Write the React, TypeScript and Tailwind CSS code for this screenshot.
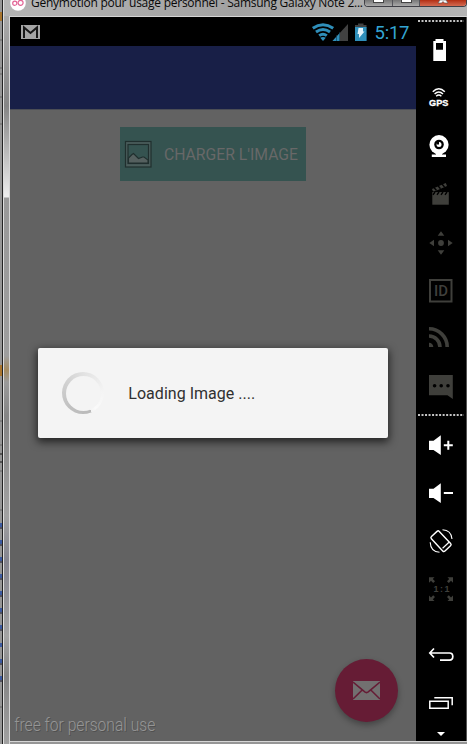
import type { ReactNode } from 'react';

function Tool({ children, dim = false }: { children: ReactNode; dim?: boolean }) {
  return (
    <svg
      viewBox="0 0 50 48"
      className={`block h-12 w-[50px] shrink-0 ${dim ? 'text-[#3f3f3b]' : 'text-white'}`}
      fill="currentColor"
    >
      {children}
    </svg>
  );
}

function Dots() {
  return (
    <svg viewBox="0 0 50 2" className="block h-0.5 w-[50px] shrink-0">
      <path d="M2 1H48" stroke="#c4c4c4" strokeWidth="2" strokeDasharray="2 1.52" />
    </svg>
  );
}

function TitleBar() {
  return (
    <div className="flex h-4 w-full shrink-0 items-start bg-gradient-to-r from-[#b5b5b5] via-[#a2a2a2] to-[#b4b4b4]">
      <svg viewBox="0 0 24 16" className="block h-4 w-6 shrink-0">
        <circle cx="14" cy="3" r="7.8" fill="#fff" />
        <g fill="none" stroke="#e36596" strokeWidth="1.2">
          <circle cx="10.8" cy="3.2" r="2.1" />
          <circle cx="16.6" cy="2.8" r="2.5" />
        </g>
      </svg>
      <svg viewBox="0 0 336 16" className="block h-4 w-[336px] shrink-0">
        <text x="3" y="7.4" textLength="332" className="font-['Open_Sans',sans-serif] text-[12px]" fill="#080808">
          Genymotion pour usage personnel - Samsung Galaxy Note 2...
        </text>
      </svg>
      <div className="flex h-[7px] w-[103px] overflow-hidden rounded-b-[4px] border border-t-0 border-[#3f3f46] bg-[#d0d0d0]">
        <div className="flex w-7 justify-center border-r border-[#55555b] bg-gradient-to-b from-[#777] to-[#aaa]">
          <div className="h-[3px] w-[11px] border-x border-b border-[#444] bg-white" />
        </div>
        <div className="flex w-[27px] justify-center border-r border-[#55555b] bg-gradient-to-b from-[#777] to-[#aaa]">
          <div className="h-[3px] w-[11px] border-x border-b border-[#444] bg-white" />
        </div>
        <div className="flex flex-1 justify-center bg-gradient-to-b from-[#b32d10] to-[#d46a50]">
          <svg viewBox="0 0 12 4" className="h-1 w-3">
            <path d="M3 0H9L11 3H7.5L6 1.5L4.5 3H1Z" fill="#fff" stroke="#555" strokeWidth=".6" />
          </svg>
        </div>
      </div>
    </div>
  );
}

function StatusBar() {
  return (
    <div className="flex h-[29px] shrink-0 bg-black">
      <svg viewBox="10 17 406 29" className="block h-[29px] w-full">
        <rect x="21" y="25" width="19" height="14" fill="#a5a5a5" />
        <path d="M24 38V27.5L30.5 33L37 27.5V38" fill="none" stroke="#181818" strokeWidth="2" />
        <g fill="none" stroke="#2f8fba" strokeWidth="3">
          <path d="M312.8 28.2Q323 21.4 333.2 28.2" />
          <path d="M316 32Q323 27 330 32" />
          <path d="M319.2 35.6Q323 32.8 326.8 35.6" />
        </g>
        <path d="M320.2 37.8Q323 36 325.8 37.8L323 41Z" fill="#2f8fba" />
        <path d="M348 24V41H332.5Z" fill="#414141" />
        <path d="M340 32.8V41H332.5Z" fill="#2f8fba" />
        <path d="M336.5 35V41M339.5 32V41" stroke="#123b4d" strokeWidth=".6" />
        <path d="M358 23.5H363.5V25H366.5V27.5H355V25H358Z" fill="#414141" />
        <rect x="355" y="27" width="11.6" height="14" fill="#2f8fba" />
        <path d="M358.5 28H363V31.5H364.5L359 38V34H357.5Z" fill="#e4f3fa" />
        <text x="374.5" y="39.2" textLength="35" className="font-['Roboto',sans-serif] text-[18.5px]" fill="#33a5d3">5:17</text>
      </svg>
    </div>
  );
}

function LoadButton() {
  return (
    <div className="ml-[110px] mt-[17px] flex h-[54px] w-[186px] shrink-0 items-center bg-[#355350]">
      <svg viewBox="0 0 28 28" className="ml-1 block h-7 w-7 shrink-0">
        <rect x="1.5" y="1.5" width="25.5" height="25.5" fill="#4a5d5b" stroke="#202f2e" strokeWidth="1.2" />
        <rect x="4" y="4.5" width="20.5" height="19" fill="#355350" stroke="#202f2e" strokeWidth="1.2" />
        <path d="M4.5 23V18L8 14.5L9.5 13.5L12 16L14.5 18.5L18.5 17L20 17L24 20V23Z" fill="#55605f" stroke="#202f2e" strokeWidth="1.1" />
      </svg>
      <svg viewBox="0 0 150 28" className="block h-7 w-[150px] shrink-0">
        <text x="12" y="20" textLength="134" lengthAdjust="spacingAndGlyphs" className="font-['Roboto',sans-serif] text-[16px]" fill="#686868">
          CHARGER L'IMAGE
        </text>
      </svg>
    </div>
  );
}

function LoadingDialog() {
  return (
    <div className="ml-7 mt-[167px] flex h-[90px] w-[350px] shrink-0 items-center rounded-[2px] bg-[#f4f4f4] shadow-[0_3px_9px_1px_rgba(0,0,0,0.65)]">
      <div className="ml-6 h-[42px] w-[42px] rounded-full bg-[conic-gradient(from_156deg,#bababa_0deg,#c0c0c0_65deg,#d2d2d2_150deg,#e3e3e3_210deg,#f4f4f4_290deg,#fafafa_345deg,#f4f4f4_360deg)] p-[3.5px]">
        <div className="h-full w-full rounded-full bg-[#f4f4f4]" />
      </div>
      <svg viewBox="0 0 160 30" className="ml-6 block h-[30px] w-40">
        <text x="0.3" y="21.3" textLength="127" className="font-['Roboto',sans-serif] text-[16px]" fill="#303030">Loading Image ....</text>
      </svg>
    </div>
  );
}

function PhoneScreen() {
  return (
    <div className="flex h-[724px] w-[406px] shrink-0 flex-col bg-[#626262]">
      <StatusBar />
      <div className="h-16 shrink-0 border-b border-[#4b4d55] bg-[#181f47]" />
      <LoadButton />
      <LoadingDialog />
      <div className="flex flex-1 items-end justify-between">
        <svg viewBox="0 0 180 30" className="block h-[30px] w-[180px]">
          <text x="4.3" y="20" textLength="141" lengthAdjust="spacingAndGlyphs" className="font-['Roboto',sans-serif] text-[18px] font-light [text-shadow:1px_1px_0_#505050]" fill="#959595">free for personal use</text>
        </svg>
        <div className="mb-[19px] mr-[18px] flex h-[63px] w-[63px] items-center justify-center rounded-full bg-[#661c35] shadow-[0_3px_6px_rgba(0,0,0,0.32)]">
          <svg viewBox="0 0 27 19" className="h-[19px] w-[27px]">
            <rect width="27" height="19" fill="#727070" />
            <path d="M0 1L10.5 9.8Q13.5 13.5 16.5 9.8L27 1M0 18L9.2 9M27 18L17.8 9" fill="none" stroke="#661c35" strokeWidth="1.6" />
          </svg>
        </div>
      </div>
    </div>
  );
}

function Toolbar() {
  return (
    <div className="flex h-[724px] w-[50px] shrink-0 flex-col bg-black pt-[3px]">
      <Dots />
      <div className="mt-1">
        <Tool><path fillRule="evenodd" d="M19.5 13H27.5V15H30V35H17.3V15H19.5ZM20 17V23.7H27V17Z" /></Tool>
        <Tool>
          <g fill="none" stroke="currentColor" strokeWidth="1.5">
            <path d="M16.8 17.8Q22.8 11.7 28.8 17.8M18.6 20.1Q22.8 15.8 27 20.1M20.2 22.2Q22.8 19.8 25.4 22.2" />
          </g>
          <text x="13" y="32.1" textLength="19.4" lengthAdjust="spacingAndGlyphs" className="font-['Liberation_Sans',sans-serif] text-[9px] font-bold" stroke="currentColor" strokeWidth=".3">GPS</text>
        </Tool>
        <Tool>
          <circle cx="23" cy="22.7" r="9.6" />
          <path d="M20 31H26V32.4H30V35H15.8V32.4H20Z" />
          <circle cx="23" cy="22.5" r="4.8" fill="#000" />
          <circle cx="23" cy="22.5" r="2.5" />
          <path d="M23 22.5V19.7H20.5V22.5Z" fill="#000" />
        </Tool>
        <Tool dim>
          <path d="M16.3 22H32.8V34.7H16.3Z" />
          <path d="M16 19L29.8 13L31 16L17.2 22Z" />
          <path d="M17 24.8L19 22M21 24.8L23 22M25 24.8L27 22M29 24.8L31 22M18 17.5L20.5 20.5M22 15.8L24.5 18.8M26 14L28.5 17" stroke="#000" strokeWidth="1.4" />
          <path d="M16.3 21.6H33" stroke="#000" strokeWidth=".6" />
        </Tool>
        <Tool dim>
          <circle cx="25" cy="25" r="2.9" />
          <path d="M25 13.3L28.3 17.8H21.7ZM25 36.8L28.3 32.3H21.7ZM13.3 25L18 21.7V28.3ZM36.7 25L32 21.7V28.3Z" />
        </Tool>
        <Tool dim>
          <rect x="14" y="14" width="21.5" height="21.5" fill="none" stroke="currentColor" strokeWidth="2" />
          <text x="18" y="30.2" textLength="14" lengthAdjust="spacingAndGlyphs" className="font-['Roboto',sans-serif] text-[15px] font-medium">ID</text>
        </Tool>
        <Tool dim>
          <path d="M13 28.7A4.3 4.3 0 0 1 17.3 33H13Z" />
          <path d="M13 22A11 11 0 0 1 24 33M13 14.8A18.2 18.2 0 0 1 31.2 33" fill="none" stroke="currentColor" strokeWidth="3.6" />
        </Tool>
        <Tool dim>
          <path d="M13 13H36.8V37L31.5 33.3H13Z" />
          <g fill="#000">
            <circle cx="18.6" cy="23.7" r="1.8" />
            <circle cx="25.2" cy="23.7" r="1.8" />
            <circle cx="32" cy="23.7" r="1.8" />
          </g>
        </Tool>
      </div>
      <div className="mb-[5px] mt-1"><Dots /></div>
      <Tool>
        <path d="M13 19.7H17.5L24.8 14.2V34L17.5 29H13Z" />
        <path d="M27.8 24.3H36.8M32.3 19.8V28.8" stroke="currentColor" strokeWidth="2" />
      </Tool>
      <Tool>
        <path d="M13 19.7H17.5L24.8 14.2V34L17.5 29H13Z" />
        <path d="M27.8 24H37" stroke="currentColor" strokeWidth="2" />
      </Tool>
      <Tool>
        <g fill="none" stroke="currentColor">
          <rect x="19.6" y="14.3" width="10.8" height="19.8" rx="1.6" strokeWidth="1.4" transform="rotate(-43 25 24.2)" />
          <path d="M26.6 31.2L33 25.2" strokeWidth="1.2" />
          <path d="M26.5 12.8Q35.2 13.2 36 22M14.2 25.2Q14.6 34.6 23.5 35.3" strokeWidth="1.1" />
        </g>
      </Tool>
      <Tool dim>
        <path d="M13 12.3H18.5L16.8 14L19 16.2L17.2 18L15 15.8L13 17.8ZM37 12.3H31.5L33.2 14L31 16.2L32.8 18L35 15.8L37 17.8ZM13 36H18.5L16.8 34.3L19 32.1L17.2 30.3L15 32.5L13 30.5ZM37 36H31.5L33.2 34.3L31 32.1L32.8 30.3L35 32.5L37 30.5Z" />
        <text x="17.5" y="27.3" textLength="16" className="font-['Liberation_Sans',sans-serif] text-[9px] font-bold">1:1</text>
      </Tool>
      <div className="mt-auto flex flex-col">
        <Tool>
          <path d="M14 22H33.5Q36.8 22 36.8 25.5T33.5 29.2H24M18 17.5L13.8 22L18 26.5" fill="none" stroke="currentColor" strokeWidth="1.7" />
        </Tool>
        <Tool>
          <path d="M13.8 22.2H32.2V29.3H13.8ZM18.3 18.7H36.2V26.2" fill="none" stroke="currentColor" strokeWidth="1.5" />
        </Tool>
        <svg viewBox="0 0 50 14" className="block h-3.5 w-[50px] shrink-0">
          <path d="M21 5H29L25 9Z" fill="#fff" />
        </svg>
      </div>
    </div>
  );
}

export default function App() {
  return (
    <div className="flex h-[744px] w-[467px] overflow-hidden bg-[#999]">
      <svg viewBox="0 0 3 744" className="block h-[744px] w-[3px] shrink-0">
        <rect width="3" height="744" fill="#969696" />
        <path d="M0 40H3M0 68H3M0 74H3M0 97H3M0 124H3M0 421H3M0 445H3M0 471H3M0 510H3M0 707H3" stroke="#666" />
        <path d="M0 12V21M0 365V376" stroke="#a8752e" strokeWidth="4" />
        <path d="M0 454H2M0 462H2" stroke="#151515" />
        <path d="M0 525H2M0 542H2M0 559H2M0 576H2M0 593H2M0 610H2M0 627H2M0 645H2M0 661H2M0 678H2" stroke="#3c5aa0" strokeWidth="4" />
        <path d="M0 528H2M0 545H2M0 562H2M0 579H2M0 596H2M0 613H2M0 630H2M0 664H2M0 681H2" stroke="#10102a" />
        <path d="M2.5 0V744" stroke="#222" />
      </svg>
      <div className="flex w-[464px] shrink-0 flex-col border-l border-[#dedede]">
        <TitleBar />
        <div className="flex h-[728px]">
          <div className="w-[5px] shrink-0 bg-[linear-gradient(180deg,#aaa_0px,#858585_90px,#eee_181px,#999_182px,#9e9e9e_340px,#a58b5f_354px,#9a9a9a_366px,#858585_400px,#a2a2a2_500px,#85858f_544px,#a4a4a4_620px,#858585_660px,#a1a1a1_728px)]" />
          <div className="flex flex-col border-l border-t border-[#d5d5d5]">
            <div className="flex h-[724px]">
              <PhoneScreen />
              <Toolbar />
              <div className="w-px shrink-0 bg-[#555]" />
            </div>
            <div className="h-px bg-[#d5d5d5]" />
            <div className="h-0.5 bg-[#969696]" />
          </div>
        </div>
      </div>
    </div>
  );
}
